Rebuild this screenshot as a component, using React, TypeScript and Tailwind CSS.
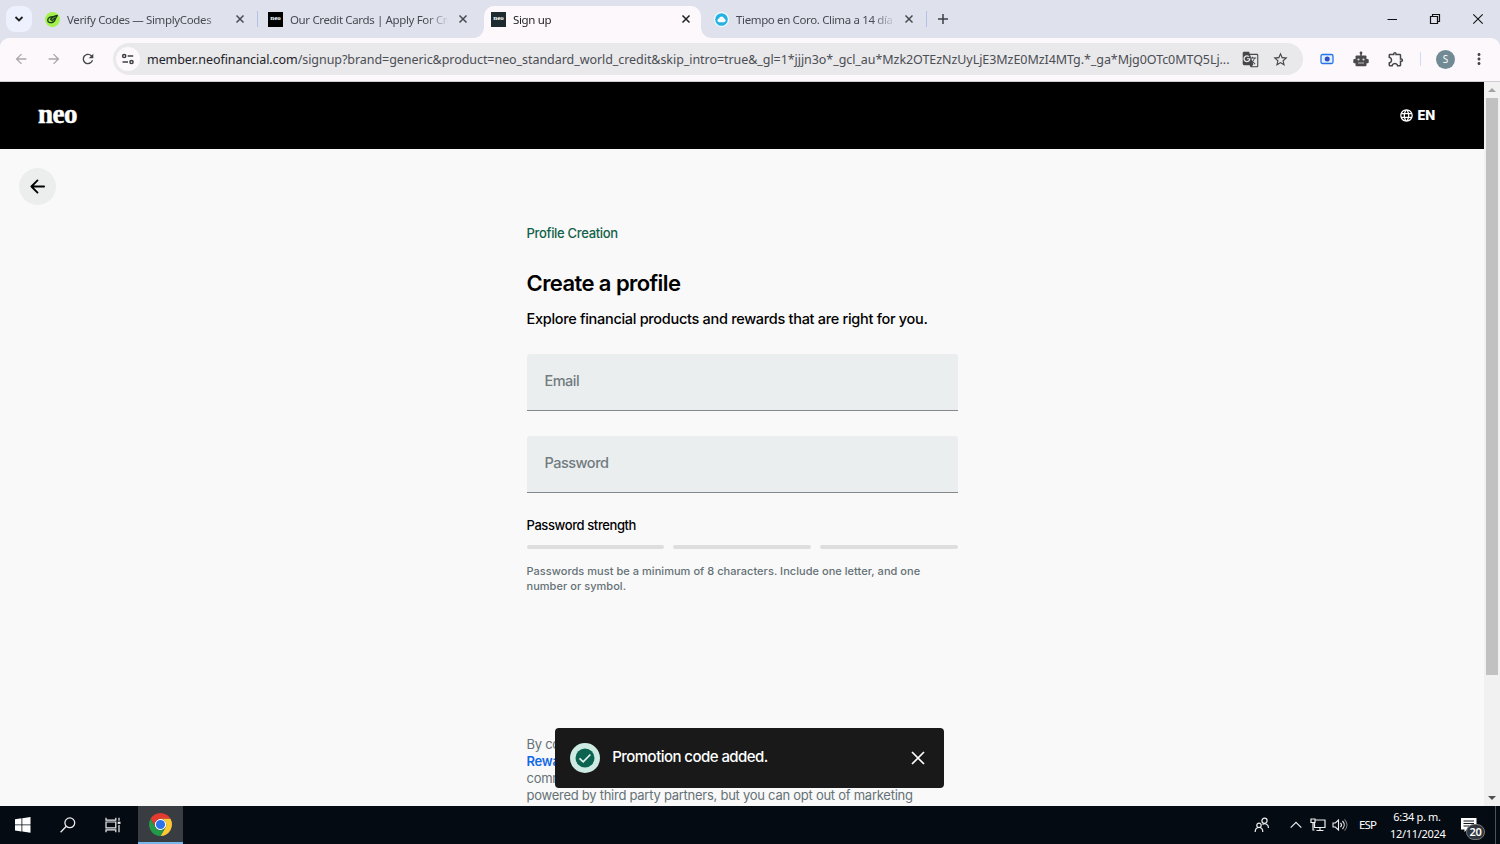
import type { ReactNode } from "react";
import {
  MdArrowBack,
  MdArrowForward,
  MdGTranslate,
  MdLanguage,
  MdMoreVert,
  MdOutlineExtension,
  MdRefresh,
  MdStarBorder,
} from "react-icons/md";

function NeoIcon({ dark }: { dark?: boolean }) {
  return (
    <div
      className={`flex size-[15px] items-center justify-center font-['Liberation_Serif',serif] text-[7px] leading-none font-bold text-white ${
        dark ? "bg-[#1d2a30]" : "bg-black"
      }`}
    >
      <span className="-mt-px">neo</span>
    </div>
  );
}

function SimplyCodesIcon() {
  return (
    <svg viewBox="0 0 15 15" className="size-[15px]">
      <circle cx="7.5" cy="7.5" r="7.5" fill="#a4f04c" />
      <path
        d="M9.300 4.900C6.500 3.900 2.700 5.500 2.700 8.200c0 2.600 3.600 3 5.700 1.700C10.300 8.700 10 6.500 12.300 3.500 9 3.800 7.200 5.200 5.500 7.400l1.700 1.100 2.500-2.300"
        fill="none"
        stroke="#173b18"
        strokeWidth="1.300"
        strokeLinecap="round"
        strokeLinejoin="round"
      />
    </svg>
  );
}

function WeatherIcon() {
  return (
    <svg viewBox="0 0 15 15" className="size-[15px]">
      <circle cx="7.500" cy="7.500" r="7.500" fill="#f2fbff" />
      <circle cx="7.500" cy="7.500" r="6.300" fill="#25b1e2" />
      <path d="M5 10.300a2 2 0 0 1 0-3.900 2.700 2.700 0 0 1 5.100 0 2 2 0 0 1 0 3.900z" fill="#fff" />
    </svg>
  );
}

interface TabProps {
  icon: ReactNode;
  title: string;
  active?: boolean;
  divider?: boolean;
}

function Tab({ icon, title, active, divider }: TabProps) {
  return (
    <div
      className={`relative flex h-8 w-[223px] shrink-0 items-center pb-[6px] ${active ? "text-[#1f1f1f]" : "text-[#474a50]"}`}
    >
      {active && (
        <div className="absolute inset-y-0 left-0 w-[217px] rounded-t-[10px] bg-[#fdf8fc]">
          <div className="absolute bottom-0 -left-[10px] size-[10px] bg-[radial-gradient(circle_at_0_0,transparent_9.500px,#fdf8fc_10px)]" />
          <div className="absolute -right-[10px] bottom-0 size-[10px] bg-[radial-gradient(circle_at_100%_0,transparent_9.500px,#fdf8fc_10px)]" />
        </div>
      )}
      <div className="relative ml-[7px]">{icon}</div>
      <div className="relative ml-[7px] w-[158px] pt-px text-[11.5px] leading-5 tracking-[-0.36px] whitespace-nowrap [mask-image:linear-gradient(to_right,black_136px,transparent_160px)]">
        {title}
      </div>
      <svg viewBox="0 0 14 14" className="relative ml-[8px] size-[14px]" stroke="currentColor" strokeWidth="1.500">
        <path d="m3.500 3.500 7 7M10.500 3.500l-7 7" />
      </svg>
      {divider && <div className="absolute top-[5px] right-[3px] h-4 w-px bg-[#b3c3e8]" />}
    </div>
  );
}

function TabStrip() {
  return (
    <div className="flex h-[38px] bg-[#dfe2ec] pt-[6px]">
      <div className="ml-[6px] flex size-[26px] items-center justify-center rounded-[9px] bg-[#edf1fd]">
        <svg viewBox="0 0 10 8" className="h-2 w-[10px]" fill="none" stroke="#1f1f1f" strokeWidth="1.800">
          <path d="M1.500 2 5 5.500 8.500 2" />
        </svg>
      </div>
      <div className="ml-[6px] flex">
        <Tab icon={<SimplyCodesIcon />} title="Verify Codes — SimplyCodes" divider />
        <Tab icon={<NeoIcon />} title="Our Credit Cards | Apply For Cre" />
        <Tab icon={<NeoIcon dark />} title="Sign up" active />
        <Tab icon={<WeatherIcon />} title="Tiempo en Coro. Clima a 14 día" divider />
      </div>
      <svg viewBox="0 0 12 12" className="mt-[7px] ml-[7px] size-3" stroke="#3c3f44" strokeWidth="1.500">
        <path d="M6 1v10M1 6h10" />
      </svg>
      <div className="mt-[7px] mr-4 ml-auto flex h-3 items-center gap-[31px]">
        <svg viewBox="0 0 12 12" className="size-3" stroke="#111" strokeWidth="1">
          <path d="M1.500 6.500h9.500" />
        </svg>
        <svg viewBox="0 0 12 12" className="size-3" fill="none" stroke="#111" strokeWidth="1.200">
          <path d="M1.500 3.500h7v7h-7zM3.500 3.500v-2h7v7h-2" />
        </svg>
        <svg viewBox="0 0 12 12" className="size-3" stroke="#111" strokeWidth="1.100">
          <path d="m1.300 1.300 9.400 9.400M10.700 1.300l-9.400 9.400" />
        </svg>
      </div>
    </div>
  );
}

function AddressBar() {
  return (
    <div className="bg-[#dfe2ec]">
      <div className="flex h-[44px] items-center rounded-t-[9px] border-b border-[#cfcccf] bg-[#fdf8fc] pb-px text-[#45474b]">
        <MdArrowBack className="ml-[13px] size-4 text-[#a9a6aa]" />
        <MdArrowForward className="ml-[17px] size-4 text-[#a9a6aa]" />
        <MdRefresh className="ml-[18px] size-4" />
        <div className="ml-[17px] flex h-8 w-[1190px] items-center rounded-full bg-[#e9e8eb]">
          <div className="ml-[3px] flex size-6 items-center justify-center rounded-full bg-[#fdf8fc]">
            <svg viewBox="0 0 14 12" className="h-3 w-[14px]" fill="none" stroke="#3c3f44" strokeWidth="1.500">
              <circle cx="3.200" cy="3" r="1.600" />
              <path d="M6.700 3h5.500M1.500 9h5.500" />
              <circle cx="10.500" cy="9" r="1.600" />
            </svg>
          </div>
          <div className="ml-[7px] w-[1084px] pt-[2px] text-[12.5px] leading-5 tracking-[-0.06px] whitespace-nowrap text-[#4b4e53]">
            <span className="text-[#222327]">member.neofinancial.com</span>
            /signup?brand=generic&amp;product=neo_standard_world_credit&amp;skip_intro=true&amp;_gl=1*jjjn3o*_gcl_au*Mzk2OTEzNzUyLjE3MzE0MzI4MTg.*_ga*Mjg0OTc0MTQ5Lj...
          </div>
          <MdGTranslate className="ml-[11px] size-[17px] shrink-0" />
          <MdStarBorder className="ml-[13px] size-[17px] shrink-0" />
        </div>
        <svg viewBox="0 0 14 12" className="ml-[17px] h-3 w-[14px]">
          <rect x="1" y="1.500" width="12" height="9" rx="1.500" fill="#e4efff" stroke="#2675e8" strokeWidth="1.300" />
          <circle cx="7.200" cy="6" r="2.500" fill="#2c4fc4" />
        </svg>
        <svg viewBox="0 0 16 16" className="ml-[19px] size-4" fill="#4a4a4d">
          <path d="M7.300 2.500h1.500v2h3.700a1 1 0 0 1 1 1V8h1.200a1 1 0 0 1 1 1v2.200a1 1 0 0 1-1 1h-1.200v2a1 1 0 0 1-1 1h-9a1 1 0 0 1-1-1v-2H1.300a1 1 0 0 1-1-1V9a1 1 0 0 1 1-1h1.200V5.500a1 1 0 0 1 1-1h3.800z" />
          <circle cx="8" cy="2" r="1.400" />
          <circle cx="5.500" cy="8.500" r="1.100" fill="#ddd" />
          <circle cx="10.500" cy="8.500" r="1.100" fill="#ddd" />
          <path d="M5 12h6" stroke="#bbb" />
        </svg>
        <MdOutlineExtension className="ml-[18px] size-[18px]" />
        <div className="ml-[15px] h-[14px] w-px bg-[#cfdcf7]" />
        <div className="ml-[15px] flex size-[19px] items-center justify-center rounded-full bg-[#718a94] text-[10px] text-white">
          S
        </div>
        <MdMoreVert className="ml-[15px] size-[18px]" />
      </div>
    </div>
  );
}

function Field({ label }: { label: string }) {
  return (
    <div className="flex h-[57px] items-center rounded-t-[3px] border-b border-[#83898c] bg-[#ebeeef] pb-[3px] pl-[18px] text-[14.5px] font-medium tracking-[-0.5px] text-[#717b80]">
      {label}
    </div>
  );
}

function Toast() {
  return (
    <div className="absolute bottom-[18.500px] left-[555.300px] flex h-[60px] w-[389px] items-center rounded-[4px] bg-[#191919]">
      <svg viewBox="0 0 30 30" className="ml-[15px] size-[30px]">
        <circle cx="15" cy="15" r="15" fill="#cdebe2" />
        <circle cx="15" cy="15" r="9.500" fill="#0c6350" />
        <path d="m9.500 15.300 3.700 3.500 7.200-7.300" fill="none" stroke="#e6f5ef" strokeWidth="1.700" />
      </svg>
      <div className="ml-[12px] text-[15px] font-medium tracking-[-0.55px] text-white">Promotion code added.</div>
      <svg viewBox="0 0 14 14" className="mr-[19px] ml-auto size-[14px]" stroke="#fff" strokeWidth="1.700">
        <path d="m1 1 12 12M13 1 1 13" />
      </svg>
    </div>
  );
}

function SignupPage() {
  return (
    <div className="relative flex-1 overflow-hidden bg-[#f9f9f9] font-['Inter',sans-serif]">
      <header className="flex h-[67px] items-center justify-between bg-black pr-[49px] pl-[38px] text-white">
        <div className="-mt-[2px] font-['Liberation_Serif',serif] text-[27px] leading-none font-bold tracking-[-0.5px] [-webkit-text-stroke:0.5px_white]">
          neo
        </div>
        <div className="flex items-center gap-1 text-[13px] font-extrabold tracking-[-0.2px]">
          <MdLanguage className="size-[15px]" />
          EN
        </div>
      </header>
      <div className="mt-[19px] ml-[19px] flex size-[37px] items-center justify-center rounded-full bg-[#eceeee]">
        <svg viewBox="0 0 16 16" className="size-[15px]" fill="none" stroke="#000" strokeWidth="2" strokeLinecap="round" strokeLinejoin="round">
          <path d="M15 8H1.500M8 1.500 1.500 8 8 14.500" />
        </svg>
      </div>
      <main className="mx-auto w-[431px]">
        <div className="mt-[18px] text-[13px] leading-5 font-medium tracking-[-0.32px] text-[#126149]">Profile Creation</div>
        <h1 className="mt-[25px] text-[22px] leading-[30px] font-semibold tracking-[-0.58px] text-black">Create a profile</h1>
        <p className="mt-[11px] text-[14.5px] leading-5 font-medium tracking-[-0.3px] whitespace-nowrap text-black">
          Explore financial products and rewards that are right for you.
        </p>
        <div className="mt-[25px] flex flex-col gap-[25px]">
          <Field label="Email" />
          <Field label="Password" />
        </div>
        <div className="mt-[22px] text-[13px] leading-5 font-medium tracking-[-0.4px] text-black">Password strength</div>
        <div className="mt-[10px] grid grid-cols-3 gap-[9px]">
          <div className="h-1 rounded-full bg-[#dedede]" />
          <div className="h-1 rounded-full bg-[#dedede]" />
          <div className="h-1 rounded-full bg-[#dedede]" />
        </div>
        <p className="mt-[15px] text-[11px] leading-[15px] font-medium tracking-[0.040px] whitespace-nowrap text-[#657176]">
          Passwords must be a minimum of 8 characters. Include one letter, and one
          <br />
          number or symbol.
        </p>
        <p className="mt-[142px] text-[13px] leading-[17px] tracking-[-0.26px] whitespace-nowrap text-[#657176]">
          By continuing
          <br />
          <a className="font-semibold text-[#1169e8]">Rewards</a>
          <br />
          communications
          <br />
          powered by third party partners, but you can opt out of marketing
        </p>
      </main>
      <Toast />
    </div>
  );
}

function Scrollbar() {
  return (
    <div className="flex w-4 flex-col items-center bg-[#f1f1f1]">
      <div className="flex h-4 items-center">
        <div className="border-x-[4px] border-b-[4px] border-x-transparent border-b-[#a3a3a3]" />
      </div>
      <div className="h-[577px] w-3 bg-[#c1c1c1]" />
      <div className="mt-auto flex h-4 items-center">
        <div className="border-x-[4px] border-t-[4px] border-x-transparent border-t-[#505050]" />
      </div>
    </div>
  );
}

function ChromeIcon() {
  return (
    <svg viewBox="0 0 48 48" className="size-[23px]">
      <circle cx="24" cy="24" r="12" fill="#fff" />
      <path d="M24 12h20.780a24 24 0 0 0-41.563 0L13.608 30l.009-.002A11.985 11.985 0 0 1 24 12z" fill="#e33b2e" />
      <circle cx="24" cy="24" r="9.500" fill="#2a73e8" />
      <path d="M34.391 30.003 24 48a24 24 0 0 0 20.780-35.997H24l-.002.009a11.985 11.985 0 0 1 10.393 17.991z" fill="#fcc934" />
      <path d="M13.609 30.003 3.218 12.006A24 24 0 0 0 24.002 48l10.391-17.997-.007-.007a11.985 11.985 0 0 1-20.777.007z" fill="#229a48" />
    </svg>
  );
}

function Taskbar() {
  return (
    <div className="flex h-[38px] items-center bg-[#050b13] text-white">
      <svg viewBox="0 0 16 16" className="ml-[15px] size-4" fill="#fff">
        <path d="M0 2.200 6.500 1.300v6.200H0zM7.300 1.200 15.500 0v7.500H7.300zM0 8.300h6.500v6.200L0 13.600zM7.300 8.300h8.200v7.500l-8.200-1.200z" />
      </svg>
      <svg viewBox="0 0 16 16" className="ml-[29px] size-4" fill="none" stroke="#eee" strokeWidth="1.300">
        <circle cx="9.800" cy="5.800" r="4.900" />
        <path d="M6.300 9.300.6 15.200" />
      </svg>
      <svg viewBox="0 0 16 16" className="ml-[29px] size-4" fill="none" stroke="#eee" strokeWidth="1.200">
        <path d="M1 .8v2.400h9.800V.8M1 15.200v-2.400h9.800v2.400M1 5h9.800v5.800H1zM14 .8v3M14 8v7.200" />
        <path d="M12.700 5.800h2.800" strokeWidth="2.200" />
      </svg>
      <div className="ml-[17px] flex h-full w-[45px] items-center justify-center border-b-2 border-[#79b6ea] bg-[#393d42]">
        <ChromeIcon />
      </div>
      <div className="ml-auto flex h-full items-center">
        <svg viewBox="0 0 16 16" className="mr-[20px] size-4" fill="none" stroke="#eee" strokeWidth="1.200">
          <circle cx="10.500" cy="3.800" r="2.600" />
          <circle cx="5" cy="8.300" r="2.200" />
          <path d="M1.200 15c0-6 7.600-6 7.600 0M8.500 7.500c3-1.800 6 0 6 3.500" />
        </svg>
        <svg viewBox="0 0 12 8" className="mr-[8px] h-2 w-3" fill="none" stroke="#eee" strokeWidth="1.200">
          <path d="m.7 6.700 5.300-5.300 5.300 5.300" />
        </svg>
        <svg viewBox="0 0 16 16" className="mr-[6px] size-4" fill="none" stroke="#eee" strokeWidth="1.200">
          <path d="M5 3h10v7.500H4.500V6M10 10.500v3M6.500 13.500h7M1 2h4v3.500H1zM3 5.500v7.500h1.500" />
        </svg>
        <svg viewBox="0 0 16 16" className="mr-[11px] size-4" fill="none" stroke="#eee" strokeWidth="1.100">
          <path d="M1 6h2.300L6.500 3v10L3.300 10H1zM8.500 5.800c1.200 1.300 1.200 3.100 0 4.400M10.500 4c2.200 2.300 2.200 5.700 0 8" />
          <path d="M12.500 2.300c3.300 3.300 3.300 8.100 0 11.400" stroke="#777" />
        </svg>
        <div className="w-[19px] text-[11.5px] tracking-[-0.9px]">ESP</div>
        <div className="ml-[12px] w-[54px] text-center text-[11px] leading-[17px] tracking-[-0.3px] whitespace-nowrap">
          6:34 p. m.
          <br />
          12/11/2024
        </div>
        <div className="relative ml-[17px] h-[22px] w-[25px]">
          <svg viewBox="0 0 16 16" className="mt-[3px] size-4">
            <path d="M0 1h15.500v11.500H6L3.500 15v-2.500H0z" fill="#fff" />
            <path d="M2.500 4h10.500M2.500 6.500h10.500M2.500 9h6" stroke="#111820" />
          </svg>
          <div className="absolute top-[10px] left-[5px] flex h-4 w-[19px] items-center justify-center rounded-full border border-[#777] bg-[#30363c] text-[11px] font-semibold tracking-[-0.2px]">
            20
          </div>
        </div>
        <div className="ml-[9px] h-full w-px bg-[#4c5257]" />
        <div className="w-[4px]" />
      </div>
    </div>
  );
}

export default function App() {
  return (
    <div className="flex h-[844px] w-[1500px] flex-col overflow-hidden font-['Noto_Sans',sans-serif]">
      <TabStrip />
      <AddressBar />
      <div className="flex min-h-0 flex-1">
        <SignupPage />
        <Scrollbar />
      </div>
      <Taskbar />
    </div>
  );
}
